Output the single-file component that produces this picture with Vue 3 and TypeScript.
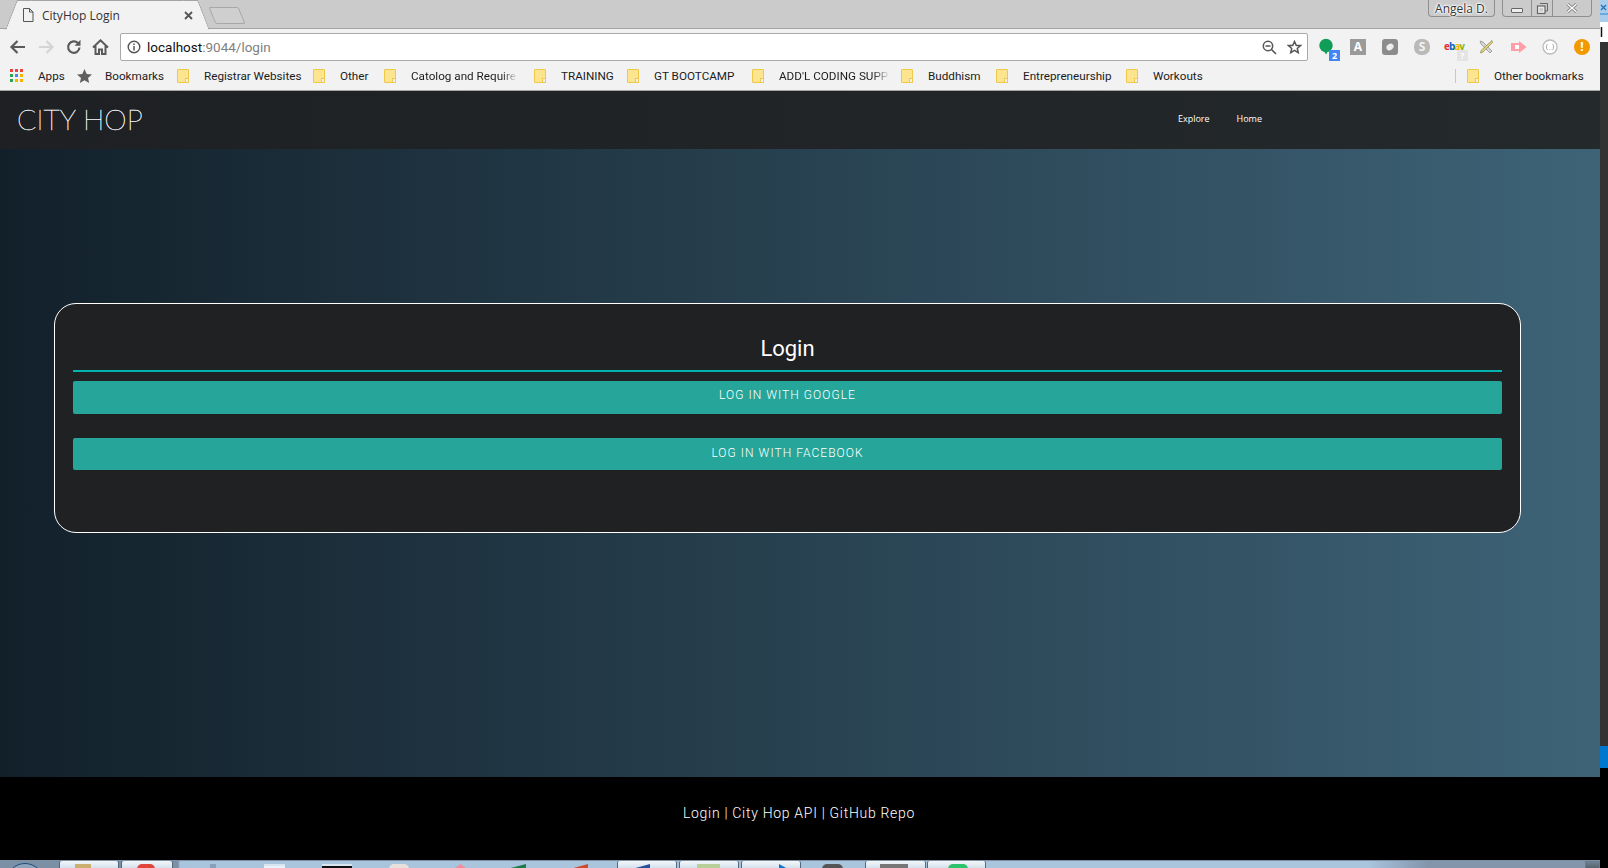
<template>
  <div class="screen">
    <div class="chrome">
      <div class="tabstrip">
        <div class="tab">
          <svg class="tab__icon" width="12" height="14" viewBox="0 0 12 14">
            <path d="M1.5 .5h6l3.500 3.500v9.500h-9.500zM7.500 .5v3.500h3.500" fill="#f2f2f2" stroke="#555" />
          </svg>
          <span class="tab__title">CityHop Login</span>
          <svg class="tab__close" width="9" height="9" viewBox="0 0 9 9">
            <path d="M1 1l7 7M8 1l-7 7" stroke="#555" stroke-width="1.800" />
          </svg>
        </div>
        <div class="tab-new"></div>
        <div class="tabstrip__space"></div>
        <div class="user-chip">Angela D.</div>
        <div class="win-buttons">
          <span class="win-btn win-btn--min"><i></i></span>
          <span class="win-btn win-btn--max">
            <svg width="13" height="13" viewBox="0 0 13 13">
              <path d="M4 1.500h7.500v7.500H9" fill="none" stroke="#666" />
              <rect x="1.500" y="4" width="7.500" height="7.500" fill="#e8e8e8" stroke="#666" stroke-width="1.200" />
              <rect x="3.500" y="6" width="3.500" height="3.500" fill="#cbcbcb" />
            </svg>
          </span>
          <span class="win-btn win-btn--close">
            <svg width="12" height="10" viewBox="0 0 12 10">
              <path d="M1.500 1l9 8M10.500 1l-9 8" stroke="#777" stroke-width="3" />
              <path d="M1.500 1l9 8M10.500 1l-9 8" stroke="#fff" stroke-width="1.400" />
            </svg>
          </span>
        </div>
      </div>

      <div class="toolbar">
        <svg class="nav-icon" width="18" height="16" viewBox="0 0 18 16">
          <path d="M16 8H3M8.500 2L2.500 8l6 6" fill="none" stroke="#5a5a5a" stroke-width="2.200" />
        </svg>
        <svg class="nav-icon" width="18" height="16" viewBox="0 0 18 16">
          <path d="M2 8h13M9.500 2l6 6-6 6" fill="none" stroke="#d4d4d4" stroke-width="2.200" />
        </svg>
        <svg class="nav-icon" width="16" height="16" viewBox="0 0 16 16">
          <path d="M13.500 8.500a5.700 5.700 0 1 1-1.600-4.400" fill="none" stroke="#5a5a5a" stroke-width="2.200" />
          <path d="M14.500 .8v6h-6z" fill="#5a5a5a" />
        </svg>
        <svg class="nav-icon" width="17" height="16" viewBox="0 0 17 16">
          <path d="M1 8.500L8.500 1.300 16 8.500M3.500 7v8h3.500v-4.500h3V15h3.500V7" fill="none" stroke="#5a5a5a" stroke-width="2" />
        </svg>

        <div class="omnibox">
          <svg class="omnibox__info" width="14" height="14" viewBox="0 0 14 14">
            <circle cx="7" cy="7" r="5.800" fill="none" stroke="#555" stroke-width="1.400" />
            <path d="M7 6v4.500M7 3.500v1.500" stroke="#555" stroke-width="1.500" />
          </svg>
          <span class="omnibox__url">localhost<em>:9044/login</em></span>
          <svg class="omnibox__zoom" width="15" height="15" viewBox="0 0 15 15">
            <circle cx="6" cy="6" r="4.700" fill="none" stroke="#555" stroke-width="1.500" />
            <path d="M3.500 6h5M9.500 9.500l4.500 4.500" stroke="#555" stroke-width="1.600" />
          </svg>
          <svg width="15" height="15" viewBox="0 0 15 15">
            <path d="M7.500 1.500l1.800 4h4.300l-3.300 2.900 1 4.300-3.800-2.300-3.800 2.300 1-4.300-3.300-2.900h4.300z" fill="none" stroke="#555" stroke-width="1.500" />
          </svg>
        </div>

        <div class="extensions">
          <span class="ext">
            <svg width="16" height="18" viewBox="0 0 16 18">
              <circle cx="8" cy="7.500" r="6.700" fill="#0f9d58" />
              <path d="M6 13l2 3.500 2-3.500z" fill="#0f9d58" />
            </svg>
            <b class="ext__badge">2</b>
          </span>
          <span class="ext">
            <span class="ext__a">A</span>
          </span>
          <span class="ext">
            <svg width="16" height="16" viewBox="0 0 16 16">
              <rect width="16" height="16" rx="3" fill="#8c8c8c" />
              <ellipse cx="8" cy="8" rx="3.800" ry="3" fill="#eee" transform="rotate(-35 8 8)" />
            </svg>
          </span>
          <span class="ext">
            <span class="ext__s">S</span>
          </span>
          <span class="ext">
            <span class="ebay"><i class="e1">e</i><i class="e2">b</i><i class="e3">a</i><i class="e4">y</i></span>
            <b class="ext__q">?</b>
          </span>
          <span class="ext">
            <svg width="16" height="16" viewBox="0 0 16 16">
              <path d="M2 2l3 1 9 9-2 2-9-9z" fill="#d6d6d6" stroke="#888" stroke-width=".7" />
              <path d="M14 1.500l.6 2L5 13l-2.500 1 .8-2.800z" fill="#e0d27c" stroke="#8a8450" stroke-width=".7" />
            </svg>
          </span>
          <span class="ext">
            <svg width="17" height="14" viewBox="0 0 17 14">
              <path d="M1 3h8V1l7.500 6L9 13v-2H1z" fill="#ff9ea6" />
              <path d="M5 5h4v4H5z" fill="#fff" />
            </svg>
          </span>
          <span class="ext">
            <svg width="16" height="16" viewBox="0 0 16 16">
              <circle cx="8" cy="8" r="7" fill="#fff" stroke="#bbb" stroke-width="1.300" />
              <path d="M5.500 5c-1.500 1.500-1.500 4.500 0 6M10.500 5c1.500 1.500 1.500 4.500 0 6M7 10.500h.6M8.700 10.500h.6" fill="none" stroke="#aaa" />
            </svg>
          </span>
          <span class="ext">
            <span class="ext__alert">!</span>
          </span>
        </div>
      </div>

      <div class="bookmarks">
        <span class="bm bm--apps">
          <span class="apps-grid">
            <i v-for="(c, i) in appColors" :key="i" :style="{ background: c }"></i>
          </span>
          Apps
        </span>
        <span class="bm bm--star">
          <svg width="15" height="14" viewBox="0 0 15 14">
            <path d="M7.500 0l2.200 4.900 5.300.5-4 3.500 1.200 5.100-4.700-2.700L2.800 14 4 8.900 0 5.400l5.300-.5z" fill="#5f5f5f" />
          </svg>
          Bookmarks
        </span>
        <span v-for="b in bookmarks" :key="b.name" class="bm" :style="{ width: b.width + 'px' }">
          <span class="folder"></span>
          <span class="bm__label" :class="{ 'bm__label--fade': b.fade }">{{ b.name }}</span>
        </span>
        <span class="bookmarks__space"></span>
        <span class="bm bm--other">
          <span class="folder"></span>
          <span class="bm__label">Other bookmarks</span>
        </span>
      </div>
    </div>

    <header class="navbar">
      <a class="navbar__brand">CITY HOP</a>
      <nav class="navbar__links">
        <a>Explore</a>
        <a>Home</a>
      </nav>
    </header>

    <main class="main">
      <section class="card">
        <h2 class="card__title">Login</h2>
        <button class="btn" type="button">LOG IN WITH GOOGLE</button>
        <button class="btn btn--second" type="button">LOG IN WITH FACEBOOK</button>
      </section>
    </main>

    <footer class="footer">
      <span>Login | City Hop API | GitHub Repo</span>
    </footer>

    <div class="taskbar">
      <span class="start-orb"></span>
      <span
        v-for="(t, i) in taskItems"
        :key="i"
        class="task"
        :class="{ 'task--open': t.open }"
        :style="{ width: t.width + 'px', marginLeft: t.gap + 'px' }"
      >
        <i
          :class="'peek--' + t.shape"
          :style="{ background: t.color, width: (t.iconW ?? t.width) + 'px', marginLeft: (t.iconX ?? 0) + 'px' }"
        ></i>
      </span>
      <span class="taskbar__space"></span>
      <span class="show-desktop"></span>
    </div>

    <div class="edge">
      <svg width="8" height="42" viewBox="0 0 8 42">
        <path d="M0 0h8v22H0z" fill="#a9cdea" />
        <path d="M1 5l5 5M6 5l-5 5" stroke="#1c6fb8" stroke-width="1.200" />
        <path d="M0 14h8" stroke="#2f86cc" />
        <path d="M0 22h8v20H0z" fill="#fff" />
        <path d="M1.500 27v10" stroke="#111" stroke-width="1.500" />
      </svg>
    </div>
  </div>
</template>

<script setup lang="ts">
interface Bookmark {
  name: string;
  width: number;
  fade?: boolean;
}

interface TaskItem {
  width: number;
  gap: number;
  color: string;
  shape: string;
  open?: boolean;
  iconW?: number;
  iconX?: number;
}

const appColors: string[] = [
  "#e8453c", "#e8453c", "#e8453c",
  "#2da44e", "#4285f4", "#f4b400",
  "#2da44e", "#f4b400", "#f4b400"
];

const bookmarks: Bookmark[] = [
  { name: "Registrar Websites", width: 136 },
  { name: "Other", width: 71 },
  { name: "Catolog and Require", width: 150, fade: true },
  { name: "TRAINING", width: 93 },
  { name: "GT BOOTCAMP", width: 125 },
  { name: "ADD'L CODING SUPP", width: 149, fade: true },
  { name: "Buddhism", width: 95 },
  { name: "Entrepreneurship", width: 130 },
  { name: "Workouts", width: 80 }
];

// pinned and running apps in the strip that is just visible at the bottom
const taskItems: TaskItem[] = [
  { width: 58, gap: 0, open: true, color: "#c9b070", shape: "bar", iconW: 16, iconX: 15 },
  { width: 50, gap: 4, open: true, color: "#e2453a", shape: "dome", iconW: 18, iconX: 15 },
  { width: 6, gap: 38, color: "#8aa0b8", shape: "bar" },
  { width: 21, gap: 48, color: "#e8f2fa", shape: "box" },
  { width: 30, gap: 37, color: "#111", shape: "box" },
  { width: 20, gap: 37, color: "#e9e0dc", shape: "dome" },
  { width: 13, gap: 45, color: "#ee8f9a", shape: "tri" },
  { width: 19, gap: 40, color: "#1d7a4a", shape: "wedge" },
  { width: 18, gap: 44, color: "#cf4a2a", shape: "wedge" },
  { width: 58, gap: 30, open: true, color: "#27509c", shape: "wedge", iconW: 18, iconX: 14 },
  { width: 58, gap: 4, open: true, color: "#b9cf9a", shape: "bar", iconW: 23, iconX: 17 },
  { width: 58, gap: 4, open: true, color: "#1773c4", shape: "half", iconW: 9, iconX: 37 },
  { width: 21, gap: 22, color: "#555", shape: "dome" },
  { width: 59, gap: 23, open: true, color: "#777", shape: "bar", iconW: 28, iconX: 14 },
  { width: 57, gap: 3, open: true, color: "#2bc46a", shape: "dome", iconW: 20, iconX: 20 }
];
</script>

<style scoped>
.screen {
  position: relative;
  width: 1608px;
  height: 868px;
  overflow: hidden;
  display: flex;
  flex-direction: column;
  background: #000;
  font-family: "Open Sans", "Liberation Sans", sans-serif;
}

.chrome {
  width: 1600px;
  height: 91px;
  flex: none;
  background: #f2f2f2;
}

.tabstrip {
  height: 28px;
  display: flex;
  align-items: flex-start;
  background: #cbcbcb;
  border-bottom: 1px solid #a3a3a3;
}

.tab {
  position: relative;
  width: 181px;
  height: 29px;
  margin-left: 17px;
  padding: 0 5px;
  box-sizing: border-box;
  display: flex;
  align-items: center;
  background: #f2f2f2;
  border-top: 1px solid #a3a3a3;
  flex: none;
}

.tab::before,
.tab::after {
  content: "";
  position: absolute;
  top: -1px;
  width: 14px;
  height: 29px;
  background: #f2f2f2;
  border-top: 1px solid #a3a3a3;
  z-index: 0;
}

.tab::before {
  left: -6px;
  border-left: 1px solid #9a9a9a;
  border-top-left-radius: 2px;
  transform: skewX(-21deg);
}

.tab::after {
  right: -6px;
  border-right: 1px solid #9a9a9a;
  border-top-right-radius: 2px;
  transform: skewX(21deg);
}

.tab__icon,
.tab__title,
.tab__close {
  position: relative;
  z-index: 1;
}

.tab__icon {
  flex: none;
}

.tab__title {
  margin-left: 8px;
  font-size: 12px;
  color: #333;
  flex: 1;
}

.tab-new {
  width: 28px;
  height: 15px;
  margin: 7px 0 0 14px;
  background: #cfcfcf;
  border: 1px solid #a8a8a8;
  border-radius: 2px;
  transform: skewX(22deg);
  flex: none;
}

.tabstrip__space {
  flex: 1;
}

.user-chip {
  width: 67px;
  height: 17px;
  box-sizing: border-box;
  border: 1px solid #8f8f8f;
  border-top: none;
  border-radius: 0 0 4px 4px;
  font-size: 12px;
  line-height: 17px;
  text-align: center;
  color: #333;
  text-shadow: 0 0 1px #fff, 0 0 2px #fff, 0 0 2px #fff, 0 0 3px #fff, 0 0 3px #fff;
  white-space: nowrap;
}

.win-buttons {
  width: 90px;
  height: 17px;
  margin: 0 8px 0 7px;
  box-sizing: border-box;
  display: flex;
  border: 1px solid #8f8f8f;
  border-top: none;
  border-radius: 0 0 4px 4px;
}

.win-btn {
  display: flex;
  align-items: center;
  justify-content: center;
  border-right: 1px solid #8f8f8f;
}

.win-btn--min {
  width: 28px;
}

.win-btn--min i {
  width: 12px;
  height: 5px;
  margin-top: 4px;
  box-sizing: border-box;
  border: 1px solid #666;
  border-radius: 1px;
  background: #eee;
}

.win-btn--max {
  width: 20px;
}

.win-btn--close {
  flex: 1;
  border-right: none;
}

.toolbar {
  height: 32px;
  box-sizing: border-box;
  padding: 4px 0 0 9px;
  display: flex;
  align-items: center;
}

.nav-icon {
  flex: none;
  margin-right: 10px;
}

.nav-icon:nth-child(2),
.nav-icon:nth-child(4) {
  margin-right: 11px;
}

.omnibox {
  width: 1188px;
  height: 28px;
  padding: 0 5px 0 6px;
  box-sizing: border-box;
  display: flex;
  align-items: center;
  flex: none;
  background: #fff;
  border: 1px solid #a9a9a9;
  border-radius: 2px;
}

.omnibox__url {
  margin-left: 6px;
  flex: 1;
  font-family: "Roboto", "Liberation Sans", sans-serif;
  font-size: 13.500px;
  color: #111;
}

.omnibox__url em {
  font-style: normal;
  color: #808080;
}

.omnibox__zoom {
  margin-right: 10px;
}

.extensions {
  display: flex;
  align-items: center;
  margin-left: 2px;
}

.ext {
  position: relative;
  width: 32px;
  height: 24px;
  display: flex;
  align-items: center;
  justify-content: center;
  flex: none;
}

.ext__badge {
  position: absolute;
  right: 2px;
  bottom: -2px;
  width: 11px;
  height: 11px;
  background: #4285f4;
  color: #fff;
  font-size: 9px;
  line-height: 11px;
  text-align: center;
}

.ext__a {
  width: 16px;
  height: 16px;
  background: #9a9a9a;
  color: #fff;
  font-size: 12px;
  font-weight: 700;
  line-height: 16px;
  text-align: center;
}

.ext__s {
  width: 16px;
  height: 16px;
  border-radius: 45%;
  background: #b9b9b9;
  color: #f2f2f2;
  font-size: 12px;
  font-weight: 700;
  line-height: 16px;
  text-align: center;
}

.ebay {
  margin-top: -3px;
  font-size: 10px;
  font-weight: 700;
  line-height: 10px;
  letter-spacing: -1px;
}

.ebay i {
  font-style: normal;
}

.e1 {
  color: #e53238;
}

.e2 {
  color: #0064d2;
}

.e3 {
  color: #f5af02;
}

.e4 {
  color: #86b817;
}

.ext__q {
  position: absolute;
  right: 2px;
  bottom: -2px;
  width: 11px;
  height: 11px;
  background: #e4e4e4;
  color: #fff;
  font-size: 8px;
  line-height: 11px;
  text-align: center;
}

.ext__alert {
  width: 16px;
  height: 16px;
  border-radius: 50%;
  background: #f29900;
  color: #fff;
  font-size: 12px;
  font-weight: 700;
  line-height: 16px;
  text-align: center;
}

.bookmarks {
  height: 30px;
  box-sizing: border-box;
  display: flex;
  align-items: center;
  padding-left: 10px;
  border-bottom: 1px solid #a6a6a6;
  font-family: "Roboto", "Liberation Sans", sans-serif;
  font-size: 11.700px;
  color: #1c1c1c;
}

.bm {
  display: flex;
  align-items: center;
  flex: none;
  white-space: nowrap;
}

.bm--apps {
  width: 67px;
}

.apps-grid {
  width: 13px;
  display: grid;
  grid-template-columns: repeat(3, 3px);
  gap: 2px;
  margin-right: 15px;
}

.apps-grid i {
  height: 3px;
}

.bm--star {
  width: 100px;
}

.bm--star svg {
  margin-right: 13px;
}

.folder {
  position: relative;
  width: 10px;
  height: 12px;
  flex: none;
  margin-right: 15px;
  background: #fde58f;
  border: 1px solid #f0c94a;
  border-radius: 1px;
}

.folder::after {
  content: "";
  position: absolute;
  right: -1px;
  bottom: -1px;
  width: 2px;
  height: 3px;
  border: 1px solid #f0c94a;
  background: #f2f2f2;
}

.bm__label--fade {
  -webkit-mask-image: linear-gradient(to right, #000 86%, rgba(0, 0, 0, 0.1) 100%);
  mask-image: linear-gradient(to right, #000 86%, rgba(0, 0, 0, 0.1) 100%);
}

.bookmarks__space {
  flex: 1;
}

.bm--other {
  width: 140px;
  box-sizing: border-box;
  margin-right: 5px;
  padding-left: 11px;
  border-left: 1px solid #c8c8c8;
}

.navbar {
  width: 1600px;
  height: 58px;
  flex: none;
  box-sizing: border-box;
  padding-bottom: 3px;
  display: flex;
  align-items: center;
  background: linear-gradient(to right, #1e2023, #24292c);
}

.navbar__brand {
  margin-left: 17px;
  font-family: "Lato", "Open Sans", sans-serif;
  font-size: 28.500px;
  font-weight: 100;
  color: #fff;
  -webkit-text-stroke: 0.35px #fff;
}

.navbar__links {
  display: flex;
  gap: 27px;
  margin-left: auto;
  margin-right: 338px;
  font-size: 9px;
  color: #fff;
}

.main {
  width: 1600px;
  height: 628px;
  flex: none;
  box-sizing: border-box;
  padding: 154px 79px 0 54px;
  background: linear-gradient(to right, #12202a, #3e6377);
}

.card {
  height: 230px;
  box-sizing: border-box;
  padding: 30px 18px 0;
  display: flex;
  flex-direction: column;
  background: #1f2123;
  border: 1px solid #fff;
  border-radius: 22px;
}

.card__title {
  margin: 0;
  height: 38px;
  box-sizing: border-box;
  border-bottom: 2px solid #00b3b3;
  font-family: "Roboto", "Liberation Sans", sans-serif;
  font-size: 22px;
  font-weight: 400;
  line-height: 30px;
  text-align: center;
  color: #fff;
}

.btn {
  height: 33px;
  margin-top: 9px;
  padding: 0 0 5px;
  border: none;
  border-radius: 2px;
  background: #26a69a;
  color: #fff;
  font-family: "Roboto", "Liberation Sans", sans-serif;
  font-size: 12px;
  font-weight: 300;
  letter-spacing: 1.05px;
  text-align: center;
}

.btn--second {
  height: 32px;
  margin-top: 24px;
  padding-bottom: 3px;
}

.footer {
  width: 1600px;
  height: 83px;
  flex: none;
  box-sizing: border-box;
  padding-top: 28px;
  background: #000;
  text-align: center;
  color: #fff;
  font-family: "Roboto", "Liberation Sans", sans-serif;
  font-size: 14px;
  font-weight: 300;
  letter-spacing: 0.7px;
}

.footer span {
  position: relative;
  left: -1px;
}

.taskbar {
  width: 1600px;
  flex: 1;
  box-sizing: border-box;
  display: flex;
  align-items: flex-start;
  overflow: hidden;
  border-top: 1px solid #7e90a5;
  background: linear-gradient(to right, #7b8fa5 0, #7b8fa5 178px, #a9c4dd 180px, #a9c4dd 1368px, #8295ab 1428px, #8295ab 100%);
}

.start-orb {
  width: 38px;
  height: 38px;
  margin: 2px 16px 0 6px;
  flex: none;
  box-sizing: border-box;
  border: 1px solid #1e4c7c;
  border-radius: 50%;
  background: #8fa4ba;
}

.task {
  height: 8px;
  flex: none;
  display: flex;
  align-items: flex-start;
}

.task--open {
  background: linear-gradient(to bottom, #f4f7fa, #cfdeeb);
  border-radius: 2px 2px 0 0;
  box-shadow: 1px 0 0 #55677c, -1px 0 0 #55677c;
}

.task i {
  display: block;
  flex: none;
  height: 5px;
  margin-top: 3px;
}

.peek--dome {
  border-radius: 10px 10px 0 0;
}

.peek--tri {
  clip-path: polygon(50% 0, 100% 100%, 0 100%);
}

.peek--wedge {
  clip-path: polygon(100% 0, 100% 100%, 0 100%);
}

.peek--half {
  clip-path: polygon(0 0, 100% 100%, 0 100%);
}

.peek--box {
  box-sizing: border-box;
  border-top: 2px solid #d8e6f2;
}

.taskbar__space {
  flex: 1;
}

.show-desktop {
  width: 15px;
  height: 8px;
  flex: none;
  box-sizing: border-box;
  border: 1px solid #6b7b8c;
  background: linear-gradient(to bottom, #6f7f90, #56636f);
}

.edge {
  position: absolute;
  top: 0;
  right: 0;
  width: 8px;
  height: 868px;
  background: linear-gradient(to bottom, #333 0, #333 746px, #0078d0 746px, #0078d0 768px, #000 768px);
}

.edge svg {
  display: block;
}
</style>

<style>
body {
  margin: 0;
  background: #000;
  overflow: hidden;
}
</style>
